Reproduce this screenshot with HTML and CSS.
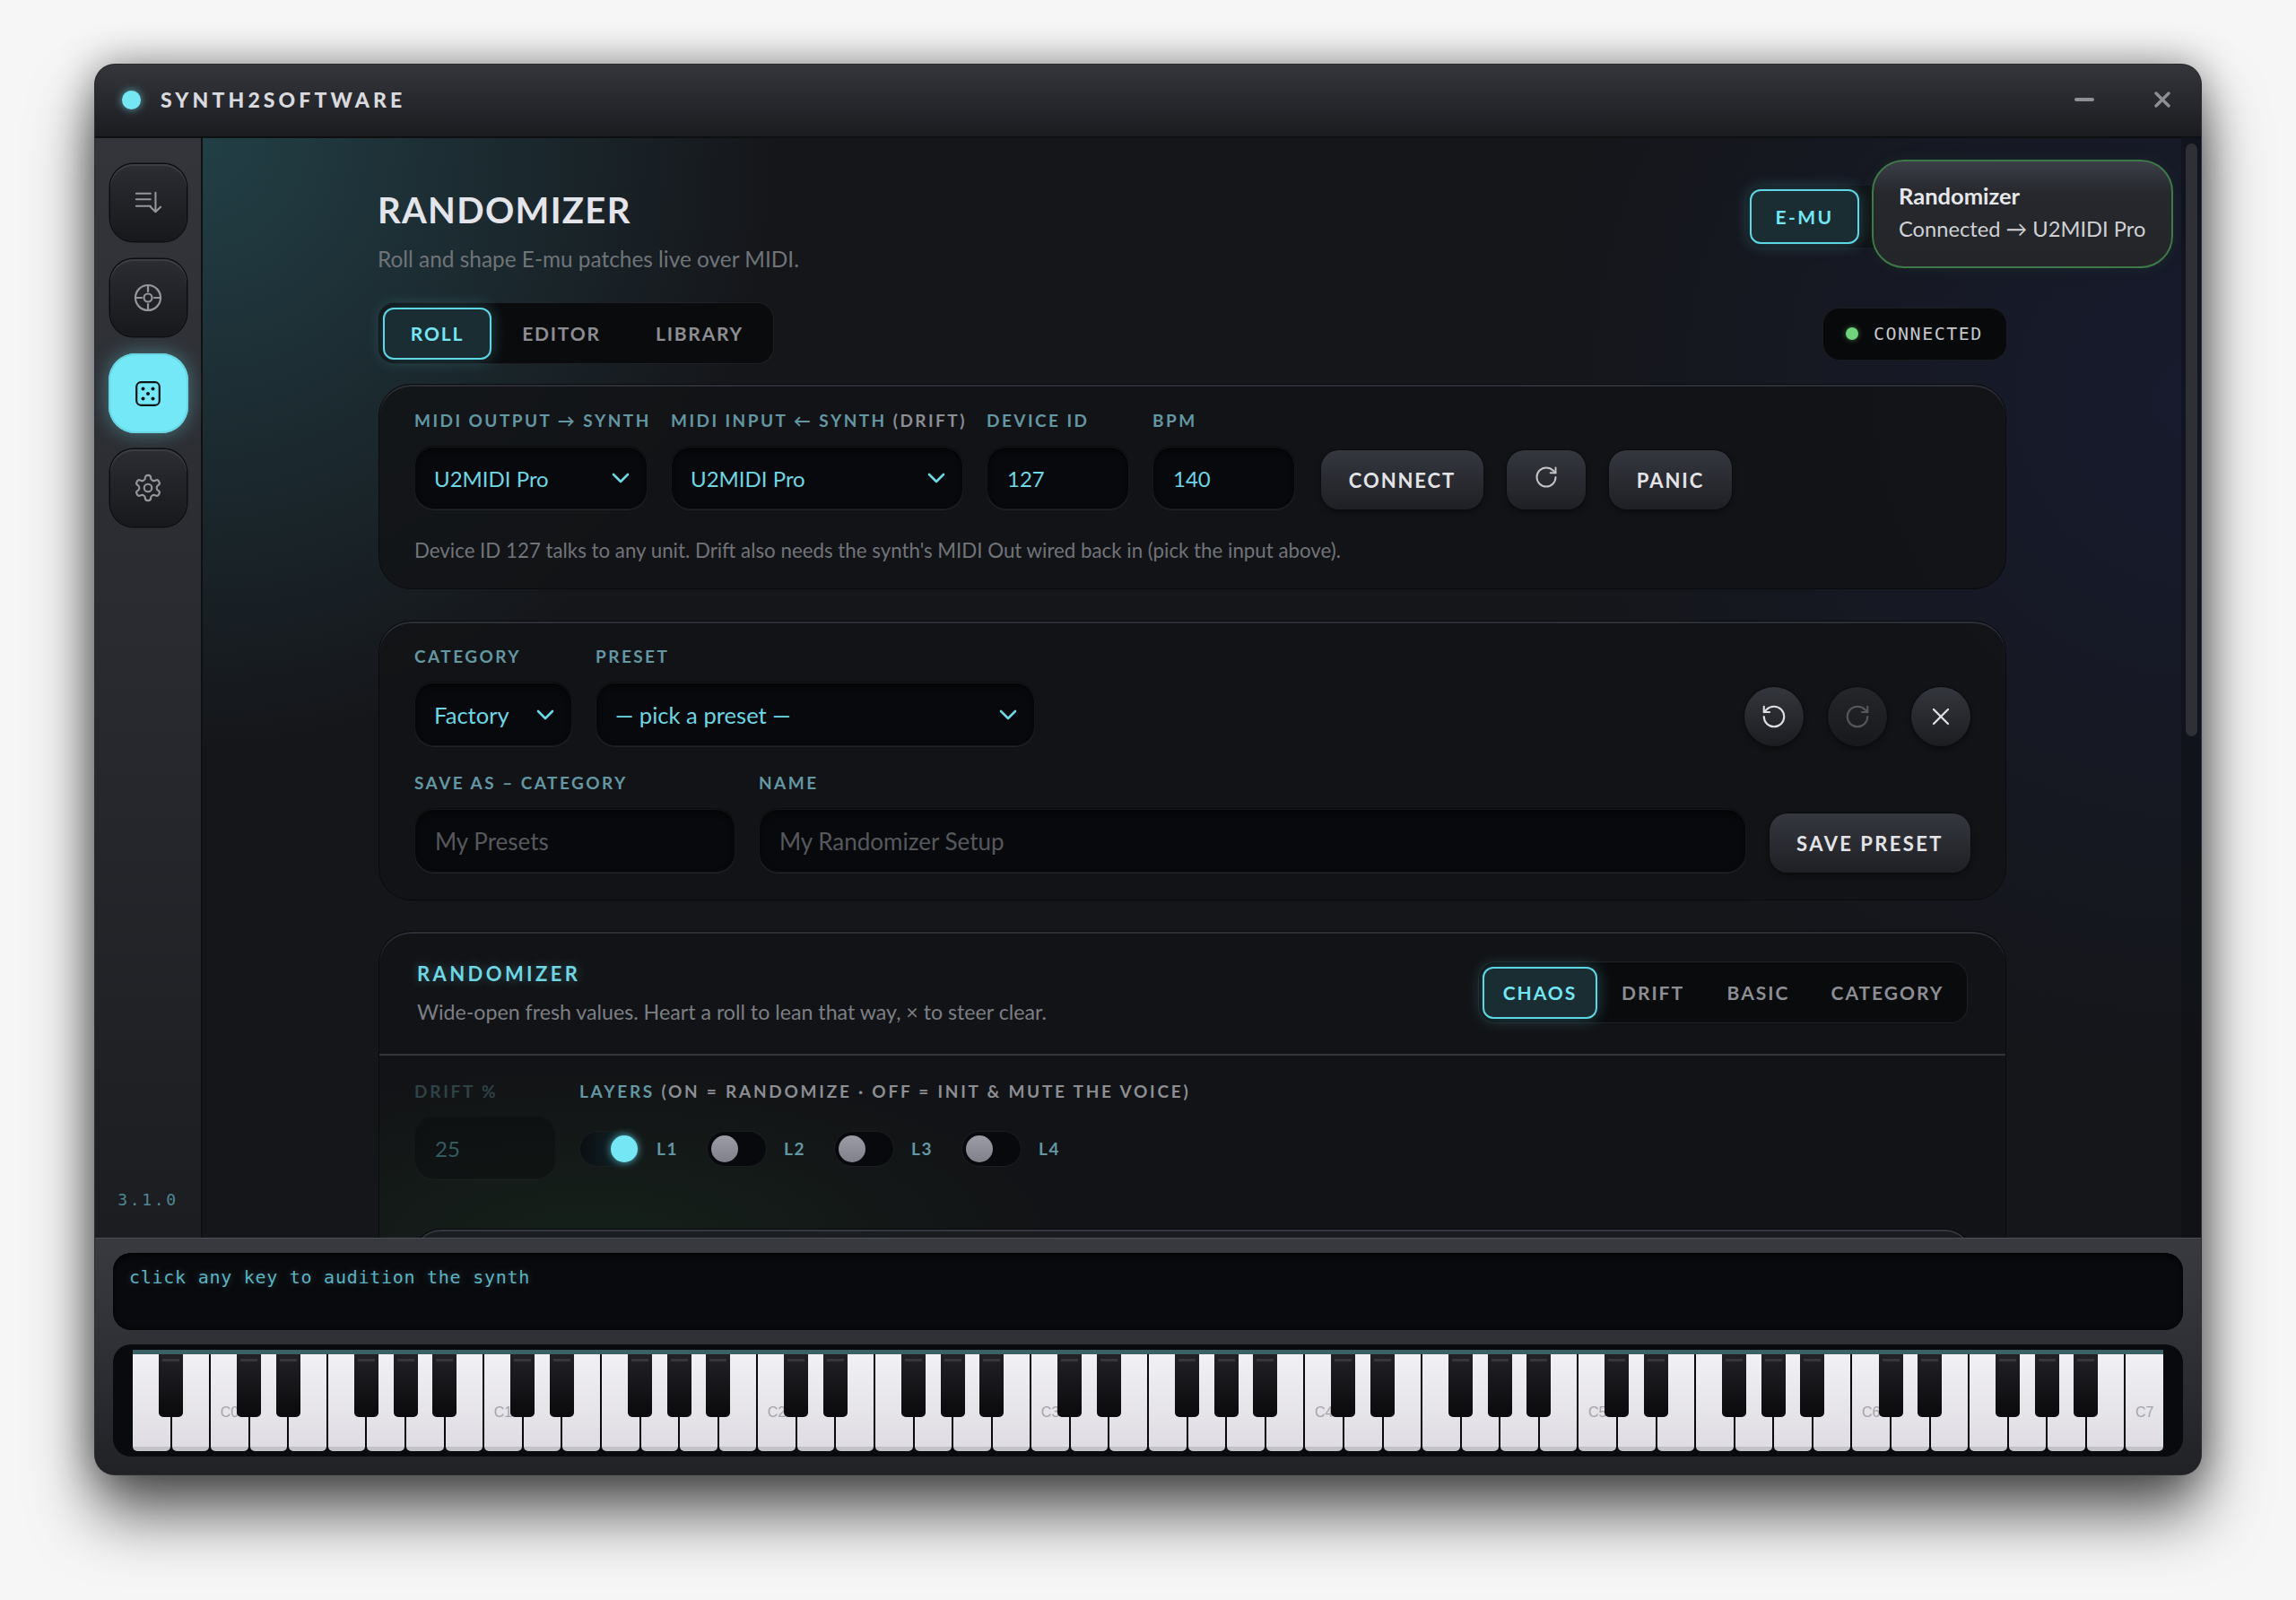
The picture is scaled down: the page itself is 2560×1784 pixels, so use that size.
FILE: index.html
```html
<!DOCTYPE html>
<html lang="en">
<head>
    <meta charset="UTF-8">
    <title>Synth2Software</title>
    <link rel="stylesheet" href="styles.css">
</head>
<body>
    <div class="window">
        <header class="titlebar">
            <span class="led"></span>
            <span class="app-name">SYNTH2SOFTWARE</span>
            <span class="win-min"></span>
            <svg class="win-close" viewBox="0 0 18 18"><path d="M2 2 16 16M16 2 2 16"/></svg>
        </header>

        <div class="middle">
            <nav class="sidebar">
                <button class="nav-btn">
                    <svg viewBox="0 0 32 32" width="30" height="30"><path d="M2 5h17M2 12h17M2 20h17M25 4v23M19 21l6 6 6-6"/></svg>
                </button>
                <button class="nav-btn">
                    <svg viewBox="0 0 32 32" width="32" height="32"><circle cx="16" cy="16" r="14"/><circle cx="16" cy="16" r="4.5"/><path d="M16 2v7M16 23v7M2 16h7M23 16h7"/></svg>
                </button>
                <button class="nav-btn active">
                    <svg viewBox="0 0 28 28" width="28" height="28"><rect x="1.2" y="1.2" width="25.6" height="25.6" rx="5"/><g class="pips"><circle cx="8.5" cy="8.5" r="2"/><circle cx="19.5" cy="8.5" r="2"/><circle cx="14" cy="14" r="2"/><circle cx="8.5" cy="19.5" r="2"/><circle cx="19.5" cy="19.5" r="2"/></g></svg>
                </button>
                <button class="nav-btn">
                    <svg viewBox="0 0 24 24" width="34" height="34" class="thin"><path d="M12.22 2h-.44a2 2 0 0 0-2 2v.18a2 2 0 0 1-1 1.73l-.43.25a2 2 0 0 1-2 0l-.15-.08a2 2 0 0 0-2.73.73l-.22.38a2 2 0 0 0 .73 2.73l.15.1a2 2 0 0 1 1 1.72v.51a2 2 0 0 1-1 1.74l-.15.09a2 2 0 0 0-.73 2.73l.22.38a2 2 0 0 0 2.73.73l.15-.08a2 2 0 0 1 2 0l.43.25a2 2 0 0 1 1 1.73V20a2 2 0 0 0 2 2h.44a2 2 0 0 0 2-2v-.18a2 2 0 0 1 1-1.73l.43-.25a2 2 0 0 1 2 0l.15.08a2 2 0 0 0 2.73-.73l.22-.39a2 2 0 0 0-.73-2.73l-.15-.08a2 2 0 0 1-1-1.74v-.5a2 2 0 0 1 1-1.74l.15-.09a2 2 0 0 0 .73-2.73l-.22-.38a2 2 0 0 0-2.73-.73l-.15.08a2 2 0 0 1-2 0l-.43-.25a2 2 0 0 1-1-1.73V4a2 2 0 0 0-2-2z"/><circle cx="12" cy="12" r="3"/></svg>
                </button>
                <div class="version">3.1.0</div>
            </nav>

            <main class="main">
                <div class="toast">
                    <strong>Randomizer</strong>
                    <span>Connected → U2MIDI Pro</span>
                </div>

                <div class="scroller">
                    <div class="page-head">
                        <div class="page-title">
                            <h1>RANDOMIZER</h1>
                            <p class="sub">Roll and shape E-mu patches live over MIDI.</p>
                        </div>
                        <div class="brand-tabs">
                            <button class="tab on brand">E-MU</button>
                        </div>
                    </div>

                    <div class="tab-row">
                        <div class="tabs main-tabs">
                            <button class="tab on">ROLL</button>
                            <button class="tab">EDITOR</button>
                            <button class="tab">LIBRARY</button>
                        </div>
                        <div class="status"><span class="status-dot"></span>CONNECTED</div>
                    </div>

                    <section class="panel midi-panel">
                        <div class="row">
                            <div class="field w-out">
                                <label>MIDI OUTPUT → SYNTH</label>
                                <div class="select">U2MIDI Pro<svg class="chev" viewBox="0 0 20 12"><path d="M2 2l8 8 8-8"/></svg></div>
                            </div>
                            <div class="field w-in">
                                <label>MIDI INPUT ← SYNTH <em>(DRIFT)</em></label>
                                <div class="select">U2MIDI Pro<svg class="chev" viewBox="0 0 20 12"><path d="M2 2l8 8 8-8"/></svg></div>
                            </div>
                            <div class="field w-num">
                                <label>DEVICE ID</label>
                                <input class="input value" type="text" value="127">
                            </div>
                            <div class="field w-num">
                                <label>BPM</label>
                                <input class="input value" type="text" value="140">
                            </div>
                            <button class="btn w-connect">CONNECT</button>
                            <button class="btn w-refresh">
                                <svg class="icon up" viewBox="0 0 24 24" width="28" height="28"><path d="M21 12a9 9 0 1 1-9-9c2.52 0 4.93 1 6.74 2.74L21 8"/><path d="M21 3v5h-5"/></svg>
                            </button>
                            <button class="btn w-panic">PANIC</button>
                        </div>
                        <p class="note">Device ID 127 talks to any unit. Drift also needs the synth's MIDI Out wired back in (pick the input above).</p>
                    </section>

                    <section class="panel preset-panel">
                        <div class="row">
                            <div class="field w-cat">
                                <label>CATEGORY</label>
                                <div class="select big">Factory<svg class="chev" viewBox="0 0 20 12"><path d="M2 2l8 8 8-8"/></svg></div>
                            </div>
                            <div class="field w-preset">
                                <label>PRESET</label>
                                <div class="select big">— pick a preset —<svg class="chev" viewBox="0 0 20 12"><path d="M2 2l8 8 8-8"/></svg></div>
                            </div>
                            <div class="round-group">
                                <button class="round">
                                    <svg class="icon" viewBox="0 0 24 24" width="30" height="30"><path d="M3 12a9 9 0 1 0 9-9 9.75 9.75 0 0 0-6.74 2.74L3 8"/><path d="M3 3v5h5"/></svg>
                                </button>
                                <button class="round off">
                                    <svg class="icon" viewBox="0 0 24 24" width="30" height="30"><path d="M21 12a9 9 0 1 1-9-9c2.52 0 4.93 1 6.74 2.74L21 8"/><path d="M21 3v5h-5"/></svg>
                                </button>
                                <button class="round">
                                    <svg class="icon" viewBox="0 0 24 24" width="32" height="32"><path d="M18 6 6 18"/><path d="m6 6 12 12"/></svg>
                                </button>
                            </div>
                        </div>
                        <div class="row row-save">
                            <div class="field w-savecat">
                                <label>SAVE AS – CATEGORY</label>
                                <input class="input tall" type="text" placeholder="My Presets">
                            </div>
                            <div class="field w-name">
                                <label>NAME</label>
                                <input class="input tall" type="text" placeholder="My Randomizer Setup">
                            </div>
                            <button class="btn w-save">SAVE PRESET</button>
                        </div>
                    </section>

                    <section class="panel rand-panel">
                        <div class="rand-head">
                            <div>
                                <h2>RANDOMIZER</h2>
                                <p class="desc">Wide-open fresh values. Heart a roll to lean that way, × to steer clear.</p>
                            </div>
                            <div class="tabs mode-tabs">
                                <button class="tab on">CHAOS</button>
                                <button class="tab">DRIFT</button>
                                <button class="tab">BASIC</button>
                                <button class="tab">CATEGORY</button>
                            </div>
                        </div>
                        <div class="rand-body">
                            <div class="row">
                                <div class="field w-drift">
                                    <label>DRIFT %</label>
                                    <input class="input value" type="text" value="25">
                                </div>
                                <div class="field">
                                    <label>LAYERS <em>(ON = RANDOMIZE · OFF = INIT &amp; MUTE THE VOICE)</em></label>
                                    <div class="layers">
                                        <div class="layer"><span class="toggle on"><i></i></span>L1</div>
                                        <div class="layer"><span class="toggle"><i></i></span>L2</div>
                                        <div class="layer"><span class="toggle"><i></i></span>L3</div>
                                        <div class="layer"><span class="toggle"><i></i></span>L4</div>
                                    </div>
                                </div>
                            </div>
                            <div class="sub-panel"></div>
                        </div>
                    </section>
                </div>

                <div class="scroll-track"><div class="scroll-thumb"></div></div>
            </main>
        </div>

        <footer class="bottom">
            <div class="monitor">click any key to audition the synth</div>
            <div class="keybed">
                <div class="keys">
                    <div class="wk"><b></b></div>
                    <div class="wk"></div>
                    <div class="wk"><span>C0</span><b></b></div>
                    <div class="wk"><b></b></div>
                    <div class="wk"></div>
                    <div class="wk"><b></b></div>
                    <div class="wk"><b></b></div>
                    <div class="wk"><b></b></div>
                    <div class="wk"></div>
                    <div class="wk"><span>C1</span><b></b></div>
                    <div class="wk"><b></b></div>
                    <div class="wk"></div>
                    <div class="wk"><b></b></div>
                    <div class="wk"><b></b></div>
                    <div class="wk"><b></b></div>
                    <div class="wk"></div>
                    <div class="wk"><span>C2</span><b></b></div>
                    <div class="wk"><b></b></div>
                    <div class="wk"></div>
                    <div class="wk"><b></b></div>
                    <div class="wk"><b></b></div>
                    <div class="wk"><b></b></div>
                    <div class="wk"></div>
                    <div class="wk"><span>C3</span><b></b></div>
                    <div class="wk"><b></b></div>
                    <div class="wk"></div>
                    <div class="wk"><b></b></div>
                    <div class="wk"><b></b></div>
                    <div class="wk"><b></b></div>
                    <div class="wk"></div>
                    <div class="wk"><span>C4</span><b></b></div>
                    <div class="wk"><b></b></div>
                    <div class="wk"></div>
                    <div class="wk"><b></b></div>
                    <div class="wk"><b></b></div>
                    <div class="wk"><b></b></div>
                    <div class="wk"></div>
                    <div class="wk"><span>C5</span><b></b></div>
                    <div class="wk"><b></b></div>
                    <div class="wk"></div>
                    <div class="wk"><b></b></div>
                    <div class="wk"><b></b></div>
                    <div class="wk"><b></b></div>
                    <div class="wk"></div>
                    <div class="wk"><span>C6</span><b></b></div>
                    <div class="wk"><b></b></div>
                    <div class="wk"></div>
                    <div class="wk"><b></b></div>
                    <div class="wk"><b></b></div>
                    <div class="wk"><b></b></div>
                    <div class="wk"></div>
                    <div class="wk"><span>C7</span></div>
                </div>
            </div>
        </footer>
    </div>
</body>
</html>
```

FILE: styles.css
```css
:root {
    --cyan: #74e6f4;
    --cyan-text: #6fd6e4;
    --label: #6497a4;
    --grey: #8c8e94;
    --well: #08090c;
    --font: 'Lato', 'Noto Sans', sans-serif;
    --mono: 'DejaVu Sans Mono', 'Liberation Mono', monospace;
}

* {
    margin: 0;
    padding: 0;
    box-sizing: border-box;
}

body {
    width: 2560px;
    height: 1784px;
    padding: 72px 106px 0 106px;
    background: #f6f6f6;
    font-family: var(--font);
    overflow: hidden;
}

button {
    font-family: var(--font);
    border: none;
    cursor: pointer;
}

svg {
    fill: none;
    stroke: currentColor;
    stroke-linecap: round;
    stroke-linejoin: round;
}

/* window frame */
.window {
    width: 2348px;
    height: 1572px;
    display: flex;
    flex-direction: column;
    border-radius: 22px;
    overflow: hidden;
    background: #1b1c20;
    box-shadow: 0 0 0 1px #2c2d31, 0 44px 70px rgba(0, 0, 0, 0.62), 0 0 46px rgba(0, 0, 0, 0.42);
}

.titlebar {
    height: 82px;
    flex: none;
    display: flex;
    align-items: center;
    padding: 0 34px 2px 30px;
    background: linear-gradient(#34363c, #1b1c20);
    border-bottom: 2px solid #0e0f11;
}

.led {
    width: 21px;
    height: 21px;
    border-radius: 50%;
    background: #74e6f4;
    box-shadow: 0 0 10px rgba(116, 230, 244, 0.7);
}

.app-name {
    margin-left: 22px;
    font-size: 23px;
    font-weight: 900;
    letter-spacing: 4.1px;
    color: #d9dade;
}

.win-min {
    margin-left: auto;
    width: 22px;
    height: 4px;
    border-radius: 2px;
    background: #8d8f96;
}

.win-close {
    margin-left: 67px;
    width: 18px;
    height: 18px;
    stroke: #8d8f96;
    stroke-width: 3.4;
}

.middle {
    flex: 1;
    display: flex;
    min-height: 0;
}

/* sidebar */
.sidebar {
    width: 120px;
    flex: none;
    display: flex;
    flex-direction: column;
    align-items: center;
    gap: 20px;
    padding-top: 29px;
    background: linear-gradient(#33353b, #2a2c31 40%, #1c1d21);
    border-right: 2px solid #0f1012;
    color: #8f9197;
}

.nav-btn {
    width: 85px;
    height: 86px;
    flex: none;
    display: flex;
    align-items: center;
    justify-content: center;
    border-radius: 26px;
    color: #94969c;
    background: linear-gradient(#2b2d33, #17181b);
    box-shadow: 0 0 0 1.5px #0c0d0f, inset 0 2px 0 #3c3e46;
}

.nav-btn svg {
    stroke-width: 2.2;
}

.nav-btn svg.thin {
    stroke-width: 1.5;
}

.nav-btn.active {
    width: 89px;
    height: 89px;
    margin-top: -1px;
    margin-bottom: -2px;
    border-radius: 30px;
    color: #0c1418;
    background: #74e8f6;
    box-shadow: 0 0 22px rgba(116, 232, 246, 0.4), inset 0 0 0 2px #6ad6e4;
}

.nav-btn .pips circle {
    fill: currentColor;
    stroke: none;
}

.version {
    margin-top: auto;
    margin-bottom: 32px;
    font-family: var(--mono);
    font-size: 18px;
    letter-spacing: 2.7px;
    color: #4f8894;
}

/* main area */
.main {
    position: relative;
    flex: 1;
    display: flex;
    min-width: 0;
    overflow: hidden;
    background:
        radial-gradient(ellipse 640px 680px at 0 0, rgba(48, 108, 118, 0.48), transparent),
        radial-gradient(ellipse 760px 760px at 100% 24%, rgba(28, 38, 90, 0.3), transparent),
        #15161a;
}

.scroller {
    flex: 1;
    min-width: 0;
    padding: 56px 195px 0 196px;
}

.scroll-track {
    width: 22px;
    flex: none;
    padding: 6px 4px 0 5px;
    background: rgba(10, 11, 13, 0.35);
}

.scroll-thumb {
    height: 661px;
    border-radius: 7px;
    background: #2e3036;
}

.toast {
    position: absolute;
    top: 24px;
    right: 31px;
    z-index: 2;
    width: 336px;
    height: 121px;
    display: flex;
    flex-direction: column;
    gap: 8px;
    padding: 24px 0 0 28px;
    border-radius: 36px;
    border: 2px solid #3d7a48;
    background: linear-gradient(#3c3e48, #26282d 30%, #232529);
    box-shadow: 0 0 16px rgba(60, 130, 70, 0.12);
    font-size: 23.7px;
    white-space: nowrap;
    color: #cfd1d5;
}

.toast strong {
    font-size: 25.5px;
    color: #e6e7ea;
    line-height: 29px;
}

.toast span {
    line-height: 29px;
}

.page-head {
    display: flex;
    justify-content: space-between;
    align-items: flex-start;
    height: 128px;
}

.page-title {
    margin-left: -1px;
}

h1 {
    font-size: 40px;
    line-height: 48px;
    font-weight: 700;
    letter-spacing: 1.3px;
    color: #e4e5ea;
}

.sub {
    margin-top: 16px;
    font-size: 24.4px;
    line-height: 30px;
    color: #6f7479;
}

.brand-tabs {
    width: 290px;
    height: 69px;
    margin-top: -3px;
    padding: 4px;
    border-radius: 20px;
    background: #0f1013;
}

.tab {
    background: none;
    font-size: 21px;
    font-weight: 700;
    letter-spacing: 2px;
    color: #8d8e94;
}

.tab.on {
    border: 2px solid #5fd6e6;
    border-radius: 12px;
    color: var(--cyan);
    background: #1a2d33;
    box-shadow: 0 0 18px rgba(95, 214, 230, 0.32);
}

.brand {
    width: 122px;
    height: 61px;
    letter-spacing: 2.4px;
}

.tab-row {
    display: flex;
    justify-content: space-between;
    align-items: flex-start;
    height: 90px;
}

.tabs {
    display: flex;
    align-items: center;
    border-radius: 18px;
    background: #0a0b0d;
    box-shadow: 0 0 0 1px #1f2126;
}

.main-tabs {
    width: 440px;
    height: 67px;
    padding-left: 5px;
}

.main-tabs .tab {
    height: 58px;
    width: 121px;
    letter-spacing: 1.8px;
}

.main-tabs .tab:nth-child(2) {
    width: 148px;
    margin-left: 4px;
}

.main-tabs .tab:nth-child(3) {
    width: 160px;
}

.status {
    width: 204px;
    height: 57px;
    margin-top: 6px;
    display: flex;
    align-items: center;
    padding: 0 0 2px 25px;
    border-radius: 18px;
    background: #08090b;
    box-shadow: 0 0 0 1px #1a1c20;
    font-family: var(--mono);
    font-size: 20px;
    letter-spacing: 1.5px;
    color: #c4c7cb;
}

.status-dot {
    width: 14px;
    height: 14px;
    margin-right: 17px;
    border-radius: 50%;
    background: #6fd47c;
    box-shadow: 0 0 6px rgba(111, 212, 124, 0.5);
}

/* panels */
.panel {
    border: 1px solid #0a0b0d;
    border-radius: 36px;
    background: rgba(18, 19, 22, 0.84);
    box-shadow: inset 0 2px 0 #2c2f38;
}

.midi-panel {
    height: 229px;
    margin-bottom: 35px;
    padding: 29px 38px 0 39px;
}

.preset-panel {
    height: 312px;
    margin-bottom: 34px;
    padding: 28px 39px 0 39px;
}

.rand-panel {
    height: 342px;
    border-bottom: none;
    border-radius: 36px 36px 0 0;
    background:
        radial-gradient(ellipse 520px 190px at 240px 100%, rgba(30, 70, 36, 0.26), transparent),
        rgba(18, 19, 22, 0.84);
}

.row {
    display: flex;
    align-items: flex-end;
    gap: 26px;
}

.field {
    display: flex;
    flex-direction: column;
}

label {
    display: block;
    margin-bottom: 18px;
    font-size: 19px;
    line-height: 22px;
    font-weight: 700;
    letter-spacing: 2.45px;
    white-space: nowrap;
    color: var(--label);
}

label em {
    font-style: normal;
    color: var(--grey);
}

.w-out { width: 260px; }
.w-in { width: 326px; }
.w-num { width: 159px; }
.w-cat { width: 176px; }
.w-preset { width: 490px; }
.w-savecat { width: 358px; }
.w-name { flex: 1; }
.w-drift { width: 158px; opacity: 0.35; }

.select,
.input {
    height: 70px;
    border: 1px solid #15171a;
    border-radius: 22px;
    background: var(--well);
    box-shadow: inset 0 2px 6px rgba(0, 0, 0, 0.6), 0 1px 0 rgba(255, 255, 255, 0.07), 0 -1px 0 #0a0b0d;
    font-family: var(--font);
    font-size: 24px;
}

.select {
    display: flex;
    align-items: center;
    justify-content: space-between;
    padding: 0 19px 0 21px;
    color: var(--cyan-text);
}

.select.big {
    height: 71px;
    font-size: 25.6px;
}

.chev {
    width: 20px;
    height: 12px;
    stroke: var(--cyan-text);
    stroke-width: 2.6;
}

.input {
    width: 100%;
    padding: 0 22px;
    outline: none;
    font-size: 26px;
    color: #55585d;
}

.input.tall {
    height: 71px;
}

.input.value {
    font-size: 24px;
    color: var(--cyan-text);
}

.input::placeholder {
    color: #55585d;
    opacity: 1;
}

.btn {
    height: 66px;
    border-radius: 20px;
    font-size: 22px;
    font-weight: 700;
    letter-spacing: 1.9px;
    color: #e3e4e7;
    background: linear-gradient(#35373f, #1f2025);
    box-shadow: 0 0 0 1px #0b0c0e, 0 3px 6px rgba(0, 0, 0, 0.4);
}

.w-connect { width: 181px; margin-left: 3px; }
.w-refresh { width: 88px; color: #c3c4c8; }
.w-panic { width: 137px; }
.w-save { width: 224px; letter-spacing: 2.4px; }

.icon {
    display: block;
    margin: 0 auto;
    stroke-width: 1.7;
}

.icon.up {
    margin-top: -6px;
}

.note {
    margin-top: 31px;
    font-size: 22.3px;
    line-height: 30px;
    color: #71747a;
}

.round-group {
    display: flex;
    gap: 27px;
    margin-left: auto;
}

.round {
    width: 66px;
    height: 66px;
    border-radius: 50%;
    color: #dfe0e3;
    background: linear-gradient(#34363d, #1c1d21);
    box-shadow: 0 0 0 1px #0b0c0e, 0 3px 6px rgba(0, 0, 0, 0.4);
}

.round.off {
    color: #55575c;
    background: linear-gradient(#24262a, #18191c);
}

.row-save {
    margin-top: 30px;
}

.rand-head {
    height: 138px;
    display: flex;
    justify-content: space-between;
    align-items: flex-start;
    padding: 33px 43px 0 42px;
    border-bottom: 2px solid #33363f;
}

h2 {
    font-size: 22px;
    line-height: 28px;
    font-weight: 700;
    letter-spacing: 3.4px;
    color: var(--cyan-text);
    text-shadow: 0 0 12px rgba(111, 214, 228, 0.35);
}

.desc {
    margin-top: 13px;
    font-size: 23.2px;
    line-height: 30px;
    color: #7c7f84;
}

.mode-tabs {
    width: 544px;
    height: 67px;
    padding-left: 4px;
    margin-top: 1px;
}

.mode-tabs .tab {
    height: 58px;
    flex: none;
}

.mode-tabs .tab:nth-child(1) { width: 128px; margin-right: 24px; }
.mode-tabs .tab:nth-child(2) { width: 76px; margin-right: 40px; }
.mode-tabs .tab:nth-child(3) { width: 79px; margin-right: 37px; }
.mode-tabs .tab:nth-child(4) { width: 135px; }

.rand-body {
    padding: 29px 37px 0 39px;
}

.rand-body .row {
    align-items: flex-start;
    gap: 26px;
}

.rand-body label {
    margin-bottom: 17px;
    letter-spacing: 2.75px;
}

.layers {
    display: flex;
    gap: 36px;
    height: 71px;
    margin-left: 1px;
    align-items: center;
}

.layer {
    display: flex;
    align-items: center;
    gap: 20px;
    width: 106px;
    font-size: 19px;
    font-weight: 700;
    letter-spacing: 1.6px;
    color: var(--label);
}

.toggle {
    width: 65px;
    height: 38px;
    flex: none;
    padding: 4px;
    border-radius: 19px;
    background: var(--well);
    box-shadow: 0 0 0 1px #1b1d21;
}

.toggle i {
    display: block;
    width: 30px;
    height: 30px;
    border-radius: 50%;
    background: linear-gradient(#9c9ca6, #7f808a);
}

.toggle.on {
    background: linear-gradient(90deg, #0b0e11, #122a31);
}

.toggle.on i {
    margin-left: 30px;
    background: var(--cyan);
    box-shadow: 0 0 10px rgba(116, 230, 244, 0.7);
}

.sub-panel {
    height: 40px;
    margin-top: 54px;
    margin-left: -1px;
    border: 1px solid #0a0b0d;
    border-bottom: none;
    border-radius: 30px 30px 0 0;
    background: rgba(30, 32, 37, 0.7);
    box-shadow: inset 0 2px 0 #34373f;
}

/* bottom console */
.bottom {
    height: 264px;
    flex: none;
    position: relative;
    padding: 16px 20px 0 20px;
    background: linear-gradient(#383a40, #303238 40%, #202226);
    border-top: 1px solid #4a4d55;
}

.monitor {
    height: 86px;
    padding: 12px 18px 0;
    border-radius: 20px;
    background: #090a0d;
    box-shadow: inset 0 2px 6px #000;
    font-family: var(--mono);
    font-size: 20px;
    line-height: 30px;
    letter-spacing: 0.73px;
    color: #5cb3c1;
    text-shadow: 0 0 8px rgba(92, 179, 193, 0.35);
}

.keybed {
    height: 125px;
    margin-top: 16px;
    padding-top: 6px;
    border-radius: 20px;
    background: #090a0d;
    padding-left: 22px;
}

.keys {
    width: 2264px;
    height: 113px;
    display: flex;
    gap: 2px;
    border-top: 5px solid #3b6167;
    background: #090a0d;
}

.wk {
    position: relative;
    flex: 1;
    border-radius: 0 0 5px 5px;
    background: linear-gradient(#f1f0f4, #dfdde3);
    border-bottom: 5px solid #c4c2c9;
}

.wk span {
    position: absolute;
    left: 0;
    right: 0;
    bottom: 28px;
    font-family: 'Liberation Sans', sans-serif;
    font-size: 16px;
    line-height: 20px;
    text-align: center;
    color: #a5a3ab;
}

/* black key sits over the gap on the right of its white key */
.wk b {
    position: absolute;
    top: 0;
    right: -14.5px;
    z-index: 1;
    width: 27px;
    height: 70px;
    border-radius: 0 0 5px 5px;
    background: linear-gradient(#222226, #0a0a0d);
}

.wk b::before {
    content: "";
    display: block;
    margin: 5px 4px 0;
    height: 3px;
    background: #37373b;
}
```
